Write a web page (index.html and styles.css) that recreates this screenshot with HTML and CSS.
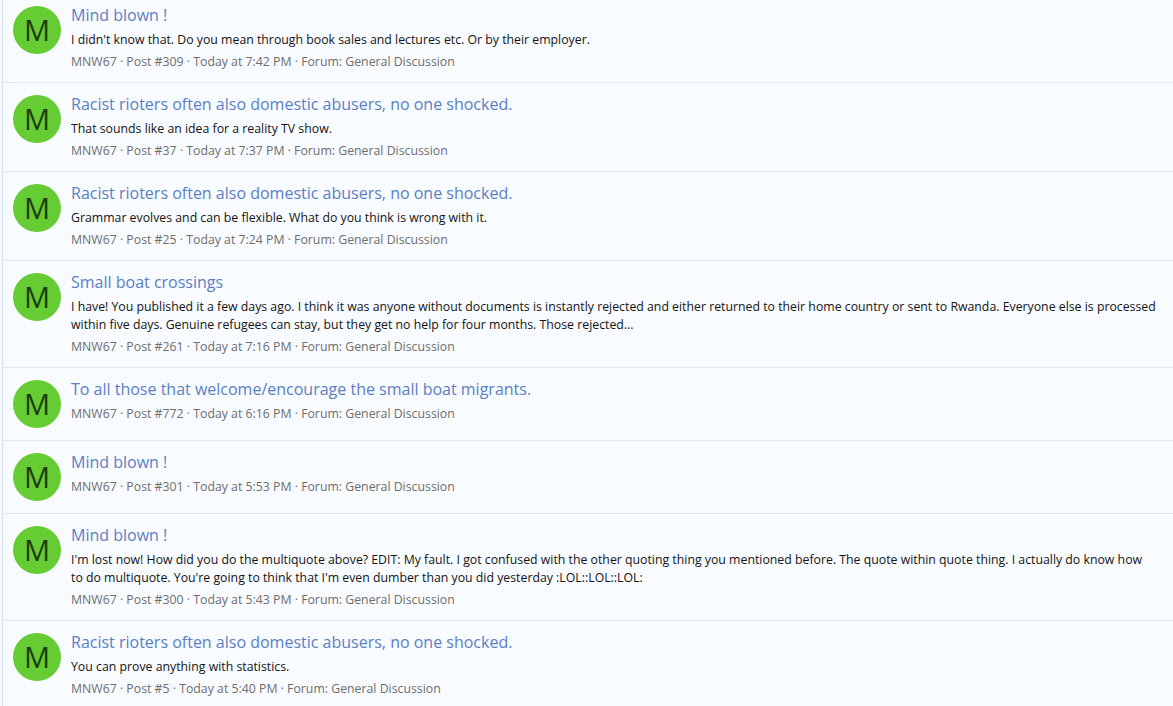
FILE: index.html
```html
<!doctype html>
<html lang="en">

<head>
  <meta charset="utf-8">
  <title>Search results</title>
  <link rel="stylesheet" href="styles.css">
</head>

<body>
  <ol class="results">
    <li class="result">
      <span class="avatar">M</span>
      <div class="body">
        <h3 class="title">Mind blown !</h3>
        <p class="snippet">I didn't know that. Do you mean through book sales and lectures etc. Or by their employer.</p>
        <p class="meta">MNW67 · Post #309 · Today at 7:42 PM · Forum: General Discussion</p>
      </div>
    </li>
    <li class="result">
      <span class="avatar">M</span>
      <div class="body">
        <h3 class="title">Racist rioters often also domestic abusers, no one shocked.</h3>
        <p class="snippet">That sounds like an idea for a reality TV show.</p>
        <p class="meta">MNW67 · Post #37 · Today at 7:37 PM · Forum: General Discussion</p>
      </div>
    </li>
    <li class="result">
      <span class="avatar">M</span>
      <div class="body">
        <h3 class="title">Racist rioters often also domestic abusers, no one shocked.</h3>
        <p class="snippet">Grammar evolves and can be flexible. What do you think is wrong with it.</p>
        <p class="meta">MNW67 · Post #25 · Today at 7:24 PM · Forum: General Discussion</p>
      </div>
    </li>
    <li class="result">
      <span class="avatar">M</span>
      <div class="body">
        <h3 class="title">Small boat crossings</h3>
        <p class="snippet">I have! You published it a few days ago. I think it was anyone without documents is instantly rejected and either returned to their home country or sent to Rwanda. Everyone else is processed within five days. Genuine refugees can stay, but they get no help for four months. Those rejected...</p>
        <p class="meta">MNW67 · Post #261 · Today at 7:16 PM · Forum: General Discussion</p>
      </div>
    </li>
    <li class="result">
      <span class="avatar">M</span>
      <div class="body">
        <h3 class="title">To all those that welcome/encourage the small boat migrants.</h3>
        <p class="meta">MNW67 · Post #772 · Today at 6:16 PM · Forum: General Discussion</p>
      </div>
    </li>
    <li class="result">
      <span class="avatar">M</span>
      <div class="body">
        <h3 class="title">Mind blown !</h3>
        <p class="meta">MNW67 · Post #301 · Today at 5:53 PM · Forum: General Discussion</p>
      </div>
    </li>
    <li class="result">
      <span class="avatar">M</span>
      <div class="body">
        <h3 class="title">Mind blown !</h3>
        <p class="snippet">I'm lost now! How did you do the multiquote above? EDIT: My fault. I got confused with the other quoting thing you mentioned before. The quote within quote thing. I actually do know how to do multiquote. You're going to think that I'm even dumber than you did yesterday :LOL::LOL::LOL:</p>
        <p class="meta">MNW67 · Post #300 · Today at 5:43 PM · Forum: General Discussion</p>
      </div>
    </li>
    <li class="result">
      <span class="avatar">M</span>
      <div class="body">
        <h3 class="title">Racist rioters often also domestic abusers, no one shocked.</h3>
        <p class="snippet">You can prove anything with statistics.</p>
        <p class="meta">MNW67 · Post #5 · Today at 5:40 PM · Forum: General Discussion</p>
      </div>
    </li>
  </ol>
</body>

</html>
```

FILE: styles.css
```css
* {
  font-family: "Open Sans", "Noto Sans", Arial, sans-serif;
}

html,
body {
  margin: 0;
  height: 100%;
  overflow: hidden;
  background-color: #f8fbff;
}

.results {
  list-style: none;
  margin: -6px 0 0 2px;
  padding: 0;
  border-left: 1px solid #d3dff5;
}

.result {
  display: flex;
  gap: 10px;
  min-height: 49px;
  padding: 12px 17px 11px 10px;
  border-bottom: 1px solid #dfe8f5;
}

.avatar {
  flex: none;
  width: 48px;
  height: 48px;
  border-radius: 50%;
  background-color: #66cc33;
  color: #1f3d0f;
  font-size: 29px;
  line-height: 47px;
  text-align: center;
}

.body {
  flex: 1;
  min-width: 0;
}

.title {
  margin: 0 0 7px;
  color: #5b80c4;
  font-size: 16px;
  font-weight: 400;
  line-height: 18px;
}

.snippet {
  margin: 0 0 4px;
  color: #141414;
  font-size: 12.3px;
  line-height: 18px;
}

.meta {
  margin: 0;
  color: #6e6e6e;
  font-size: 12.3px;
  line-height: 18px;
}
```
